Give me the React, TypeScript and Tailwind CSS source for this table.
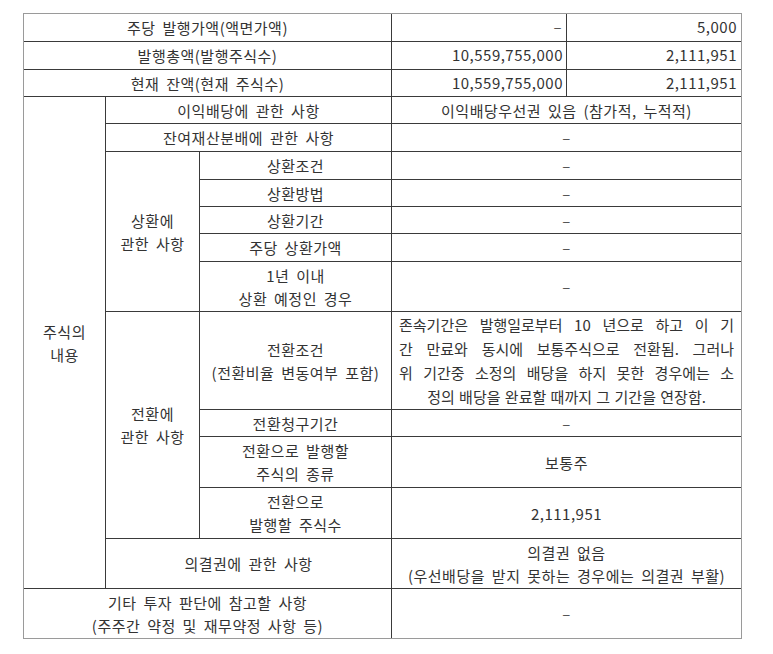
import React from "react";

const base =
  "bg-white flex flex-col items-center justify-center text-center leading-[23px]";

function Dash() {
  return <span className="text-[#555]">–</span>;
}

export default function App() {
  return (
    <div
      className="w-[773px] h-[654px] bg-white pl-[23px] pt-[13px] text-[15px] tracking-[0.5px] [word-spacing:3px] text-[#333]"
      style={{ fontFamily: '"Noto Sans CJK KR", "Noto Sans", sans-serif' }}
    >
      <div className="grid w-max gap-px bg-[#3a3a3a] border border-[#9a9a9a] grid-cols-[81px_93px_191px_174px_174px] grid-rows-[27px_27px_26px_26px_27px_27px_26px_26px_27px_49px_97px_26px_50px_50px_49px_49px]">
        {/* Row 1 */}
        <div className={`${base} col-start-1 col-span-3 row-start-1`}>주당 발행가액(액면가액)</div>
        <div className="bg-white flex items-center justify-end pr-[4px] col-start-4 row-start-1">
          <Dash />
        </div>
        <div className="bg-white flex items-center justify-end pr-[4px] col-start-5 row-start-1">5,000</div>

        {/* Row 2 */}
        <div className={`${base} col-start-1 col-span-3 row-start-2`}>발행총액(발행주식수)</div>
        <div className="bg-white flex items-center justify-end pr-[3px] col-start-4 row-start-2">10,559,755,000</div>
        <div className="bg-white flex items-center justify-end pr-[4px] col-start-5 row-start-2">2,111,951</div>

        {/* Row 3 */}
        <div className={`${base} col-start-1 col-span-3 row-start-3`}>현재 잔액(현재 주식수)</div>
        <div className="bg-white flex items-center justify-end pr-[3px] col-start-4 row-start-3">10,559,755,000</div>
        <div className="bg-white flex items-center justify-end pr-[4px] col-start-5 row-start-3">2,111,951</div>

        {/* 주식의 내용 */}
        <div className={`${base} col-start-1 row-start-4 row-span-12`}>
          <div>주식의</div>
          <div>내용</div>
        </div>

        {/* 이익배당 */}
        <div className={`${base} col-start-2 col-span-2 row-start-4`}>이익배당에 관한 사항</div>
        <div className={`${base} col-start-4 col-span-2 row-start-4`}>이익배당우선권 있음 (참가적, 누적적)</div>

        {/* 잔여재산 */}
        <div className={`${base} col-start-2 col-span-2 row-start-5`}>잔여재산분배에 관한 사항</div>
        <div className={`${base} col-start-4 col-span-2 row-start-5`}>
          <Dash />
        </div>

        {/* 상환 */}
        <div className={`${base} col-start-2 row-start-6 row-span-5`}>
          <div>상환에</div>
          <div>관한 사항</div>
        </div>
        <div className={`${base} col-start-3 row-start-6`}>상환조건</div>
        <div className={`${base} col-start-4 col-span-2 row-start-6`}>
          <Dash />
        </div>
        <div className={`${base} col-start-3 row-start-7`}>상환방법</div>
        <div className={`${base} col-start-4 col-span-2 row-start-7`}>
          <Dash />
        </div>
        <div className={`${base} col-start-3 row-start-8`}>상환기간</div>
        <div className={`${base} col-start-4 col-span-2 row-start-8`}>
          <Dash />
        </div>
        <div className={`${base} col-start-3 row-start-9`}>주당 상환가액</div>
        <div className={`${base} col-start-4 col-span-2 row-start-9`}>
          <Dash />
        </div>
        <div className={`${base} col-start-3 row-start-10`}>
          <div>1년 이내</div>
          <div>상환 예정인 경우</div>
        </div>
        <div className={`${base} col-start-4 col-span-2 row-start-10`}>
          <Dash />
        </div>

        {/* 전환 */}
        <div className={`${base} col-start-2 row-start-11 row-span-4`}>
          <div>전환에</div>
          <div>관한 사항</div>
        </div>
        <div className={`${base} col-start-3 row-start-11`}>
          <div>전환조건</div>
          <div className="whitespace-nowrap">(전환비율 변동여부 포함)</div>
        </div>
        <div className="bg-white flex flex-col justify-center px-[7px] leading-[24px] tracking-[0px] [word-spacing:1px] col-start-4 col-span-2 row-start-11">
          <div className="whitespace-nowrap text-justify [text-align-last:justify]">존속기간은 발행일로부터 10 년으로 하고 이 기</div>
          <div className="whitespace-nowrap text-justify [text-align-last:justify]">간 만료와 동시에 보통주식으로 전환됨. 그러나</div>
          <div className="whitespace-nowrap text-justify [text-align-last:justify]">위 기간중 소정의 배당을 하지 못한 경우에는 소</div>
          <div className="whitespace-nowrap text-center">정의 배당을 완료할 때까지 그 기간을 연장함.</div>
        </div>
        <div className={`${base} col-start-3 row-start-12`}>전환청구기간</div>
        <div className={`${base} col-start-4 col-span-2 row-start-12`}>
          <Dash />
        </div>
        <div className={`${base} col-start-3 row-start-13`}>
          <div>전환으로 발행할</div>
          <div>주식의 종류</div>
        </div>
        <div className={`${base} col-start-4 col-span-2 row-start-13`}>보통주</div>
        <div className={`${base} col-start-3 row-start-14`}>
          <div>전환으로</div>
          <div>발행할 주식수</div>
        </div>
        <div className={`${base} col-start-4 col-span-2 row-start-14`}>2,111,951</div>

        {/* 의결권 */}
        <div className={`${base} col-start-2 col-span-2 row-start-15`}>의결권에 관한 사항</div>
        <div className={`${base} col-start-4 col-span-2 row-start-15`}>
          <div>의결권 없음</div>
          <div className="whitespace-nowrap">(우선배당을 받지 못하는 경우에는 의결권 부활)</div>
        </div>

        {/* 기타 */}
        <div className={`${base} col-start-1 col-span-3 row-start-16`}>
          <div>기타 투자 판단에 참고할 사항</div>
          <div>(주주간 약정 및 재무약정 사항 등)</div>
        </div>
        <div className={`${base} col-start-4 col-span-2 row-start-16`}>
          <Dash />
        </div>
      </div>
    </div>
  );
}
